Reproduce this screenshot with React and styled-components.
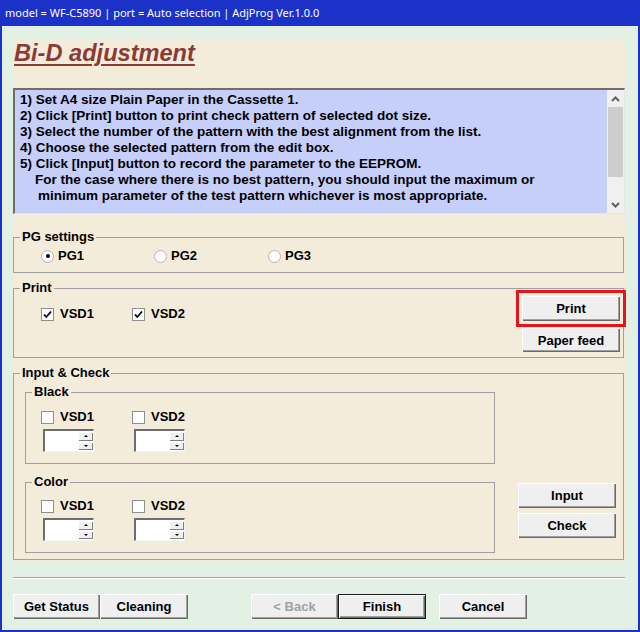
import React from 'react'
import styled, { createGlobalStyle } from 'styled-components';

const GlobalStyle = createGlobalStyle`
    body {
        margin: 0;
        background: #fff;
    }
`;

const Window = styled.div`
    width: 640px;
    height: 632px;
    box-sizing: border-box;
    border: 2px solid #1b31c7;
    border-top: 0;
    background: #e2f1e3;
    display: flex;
    flex-direction: column;
    font-family: "Liberation Sans", Arial, sans-serif;
    color: #000;
`;

const TitleBar = styled.div`
    height: 26px;
    margin: 0 -2px;
    padding-left: 5px;
    background: #1b31c7;
    color: #fff;
    font-family: "Noto Sans", "Liberation Sans", sans-serif;
    font-size: 11px;
    line-height: 26px;
    white-space: nowrap;
`;

const Panel = styled.div`
    height: 522px;
    margin: 13px 12px 0 11px;
    padding-right: 1px;
    box-sizing: border-box;
    background: #f3ecdb;
    display: flex;
    flex-direction: column;
`;

const Heading = styled.div`
    height: 49px;
    flex-shrink: 0;
    box-sizing: border-box;
    padding: 1px 0 0 1px;
    font-size: 23.6px;
    line-height: 26px;
    font-weight: bold;
    font-style: italic;
    color: #8b3a36;
    span {
        text-decoration: underline;
        text-decoration-thickness: 2px;
        text-underline-offset: 3px;
    }
`;

const TextBox = styled.div`
    height: 126px;
    flex-shrink: 0;
    box-sizing: border-box;
    border-style: solid;
    border-width: 2px 1px 1px 2px;
    border-color: #6d6d6d #e6e6e6 #e6e6e6 #6d6d6d;
    background: #c6cefa;
    display: flex;
`;

const TextLines = styled.div`
    flex: 1;
    padding: 2px 0 0 5px;
    font-size: 13.5px;
    font-weight: bold;
    line-height: 16px;
    white-space: nowrap;
`;

const Line = styled.div`
    padding-left: ${p => p.$indent || 0}px;
`;

const ScrollBar = styled.div`
    width: 17px;
    background: #f0f0f0;
    display: flex;
    flex-direction: column;
`;

const ScrollArrow = styled.div`
    height: 17px;
    display: flex;
    align-items: center;
    justify-content: center;
`;

const Thumb = styled.div`
    height: 70px;
    margin: 0 1px;
    background: #cdcdcd;
`;

const Spacer = styled.div`
    flex: 1;
`;

const Group = styled.fieldset`
    min-width: 0;
    margin: ${p => p.$mt || 0}px ${p => p.$mr ?? 1}px 0 0;
    padding: 0 0 ${p => p.$pb || 0}px 0;
    border: 1px solid #a0a0a0;
    width: ${p => p.$width ? p.$width + 'px' : 'auto'};
    box-sizing: border-box;
    flex-shrink: 0;
`;

const Legend = styled.legend`
    margin-left: 6px;
    padding: 0 2px;
    font-size: 13px;
    font-weight: bold;
    line-height: 16px;
`;

const OptionRow = styled.div`
    display: flex;
    height: 16px;
    margin-top: ${p => p.$mt || 0}px;
    padding-left: ${p => p.$pl || 0}px;
`;

const Option = styled.label`
    width: ${p => p.$width}px;
    display: flex;
    align-items: center;
    gap: ${p => p.$gap || 6}px;
    font-size: 13px;
    font-weight: bold;
    line-height: 16px;
    white-space: nowrap;
`;

const RadioDot = styled.span`
    width: 13px;
    height: 13px;
    box-sizing: border-box;
    border-radius: 50%;
    border: 1px solid #b4b4b4;
    background: #fff;
    display: flex;
    align-items: center;
    justify-content: center;
    &::after {
        content: '';
        width: 4px;
        height: 4px;
        border-radius: 50%;
        background: ${p => p.$on ? '#000' : 'transparent'};
    }
`;

const CheckBox = styled.span`
    width: 13px;
    height: 13px;
    box-sizing: border-box;
    border: 1px solid #8e8f8f;
    background: #fff;
    display: flex;
    align-items: center;
    justify-content: center;
`;

const PrintBody = styled.div`
    display: flex;
    justify-content: space-between;
    padding-bottom: 5px;
`;

const ButtonStack = styled.div`
    display: flex;
    flex-direction: column;
    gap: ${p => p.$gap || 0}px;
    margin-right: ${p => p.$mr || 0}px;
    justify-content: flex-end;
    padding-bottom: ${p => p.$pb || 0}px;
`;

const Button = styled.button`
    width: ${p => p.$width || 87}px;
    height: ${p => p.$height || 25}px;
    padding: 0;
    box-sizing: border-box;
    font-family: "Liberation Sans", Arial, sans-serif;
    font-size: 13px;
    font-weight: bold;
    color: ${p => p.disabled ? '#a0a0a0' : '#000'};
    background: #efefef;
    border: ${p => p.$default ? '1px solid #1a1a1a' : '0'};
    box-shadow: inset 1px 1px 0 #fff, inset -1px -1px 0 #696969, inset -2px -2px 0 #a0a0a0;
    outline: ${p => p.$highlight ? '3px solid #e8141c' : 'none'};
    outline-offset: 3px;
`;

const CheckBody = styled.div`
    display: flex;
    padding: 0 7px 6px 11px;
`;

const SubGroups = styled.div`
    display: flex;
    flex-direction: column;
`;

const VsdGrid = styled.div`
    display: grid;
    grid-template-columns: 91px 91px;
    padding-left: 15px;
    margin-top: ${p => p.$mt || 0}px;
`;

const VsdColumn = styled.div`
    display: flex;
    flex-direction: column;
    gap: 4px;
`;

const Spinner = styled.div`
    width: 51px;
    height: 23px;
    margin-left: 2px;
    box-sizing: border-box;
    border-style: solid;
    border-width: 2px 1px 1px 2px;
    border-color: #6d6d6d #f4f4f4 #f4f4f4 #6d6d6d;
    background: #fff;
    display: flex;
    justify-content: flex-end;
`;

const SpinColumn = styled.div`
    width: 15px;
    padding: 1px 0;
    display: flex;
    flex-direction: column;
    gap: 1px;
`;

const SpinButton = styled.div`
    height: 9px;
    background: #f0f0f0;
    box-shadow: inset 1px 1px 0 #fff, inset -1px -1px 0 #808080;
    display: flex;
    align-items: center;
    justify-content: center;
    &::after {
        content: '';
        border-left: 2px solid transparent;
        border-right: 2px solid transparent;
        ${p => p.$down ? 'border-top: 2px solid #000;' : 'border-bottom: 2px solid #000;'}
    }
`;

const Separator = styled.div`
    height: 2px;
    box-sizing: border-box;
    margin: 16px 13px 0 11px;
    border-top: 1px solid #a0a0a0;
    border-bottom: 1px solid #fff;
`;

const Footer = styled.div`
    display: flex;
    margin: 15px 0 0 11px;
`;

const ButtonGroup = styled.div`
    display: flex;
    margin-left: ${p => p.$ml || 0}px;
`;

const Check = ({ on }) => (
    <CheckBox>
        {on && (
            <svg width="9" height="9" viewBox="0 0 9 9">
                <polyline points="1,4.5 3.3,7 8,1.5" fill="none" stroke="#000" strokeWidth="1.8" />
            </svg>
        )}
    </CheckBox>
);

const Chevron = ({ down }) => (
    <svg width="9" height="6" viewBox="0 0 9 6">
        <polyline points={down ? "1,1 4.5,4.5 8,1" : "1,5 4.5,1.5 8,5"} fill="none" stroke="#606060" strokeWidth="2" />
    </svg>
);

const Spin = () => (
    <Spinner>
        <SpinColumn>
            <SpinButton />
            <SpinButton $down />
        </SpinColumn>
    </Spinner>
);

const VsdBlock = ({ title, mt }) => (
    <Group $mt={mt} $pb={11} $mr={0} $width={470}>
        <Legend>{title}</Legend>
        <VsdGrid $mt={title === 'Black' ? 9 : 8}>
            {['VSD1', 'VSD2'].map(v => (
                <VsdColumn key={v}>
                    <Option $width={91}><Check />{v}</Option>
                    <Spin />
                </VsdColumn>
            ))}
        </VsdGrid>
    </Group>
);

const lines = [
    ['1) Set A4 size Plain Paper in the Cassette 1.', 0],
    ['2) Click [Print] button to print check pattern of selected dot size.', 0],
    ['3) Select the number of the pattern with the best alignment from the list.', 0],
    ['4) Choose the selected pattern from the edit box.', 0],
    ['5) Click [Input] button to record the parameter to the EEPROM.', 0],
    ['For the case where there is no best pattern, you should input the maximum or', 15],
    ['minimum parameter of the test pattern whichever is most appropriate.', 18],
];

const App = () => {
  return (
    <Window>
        <GlobalStyle />
        <TitleBar>model = WF-C5890 | port = Auto selection | AdjProg Ver.1.0.0</TitleBar>
        <Panel>
            <Heading><span>Bi-D adjustment</span></Heading>
            <TextBox>
                <TextLines>
                    {lines.map(([t, indent]) => <Line key={t} $indent={indent}>{t}</Line>)}
                </TextLines>
                <ScrollBar>
                    <ScrollArrow><Chevron /></ScrollArrow>
                    <Thumb />
                    <Spacer />
                    <ScrollArrow><Chevron down /></ScrollArrow>
                </ScrollBar>
            </TextBox>

            <Group $mt={15} $pb={8}>
                <Legend>PG settings</Legend>
                <OptionRow $mt={3} $pl={27}>
                    <Option $width={113} $gap={4}><RadioDot $on />PG1</Option>
                    <Option $width={114} $gap={4}><RadioDot />PG2</Option>
                    <Option $width={113} $gap={4}><RadioDot />PG3</Option>
                </OptionRow>
            </Group>

            <Group $mt={7}>
                <Legend>Print</Legend>
                <PrintBody>
                    <OptionRow $mt={10} $pl={27}>
                        <Option $width={91}><Check on />VSD1</Option>
                        <Option $width={91}><Check on />VSD2</Option>
                    </OptionRow>
                    <ButtonStack $gap={7} $mr={3}>
                        <Button $width={98} $highlight>Print</Button>
                        <Button $width={98} $height={24}>Paper feed</Button>
                    </ButtonStack>
                </PrintBody>
            </Group>

            <Group $mt={7}>
                <Legend>Input &amp; Check</Legend>
                <CheckBody>
                    <SubGroups>
                        <VsdBlock title="Black" mt={3} />
                        <VsdBlock title="Color" mt={10} />
                    </SubGroups>
                    <Spacer />
                    <ButtonStack $gap={5} $pb={15}>
                        <Button $width={98}>Input</Button>
                        <Button $width={98}>Check</Button>
                    </ButtonStack>
                </CheckBody>
            </Group>
        </Panel>

        <Separator />
        <Footer>
            <ButtonGroup>
                <Button>Get Status</Button>
                <Button $width={88}>Cleaning</Button>
            </ButtonGroup>
            <ButtonGroup $ml={63}>
                <Button disabled>&lt; Back</Button>
                <Button $width={88} $default>Finish</Button>
            </ButtonGroup>
            <ButtonGroup $ml={13}>
                <Button $width={88}>Cancel</Button>
            </ButtonGroup>
        </Footer>
    </Window>
  )
}

export default App
